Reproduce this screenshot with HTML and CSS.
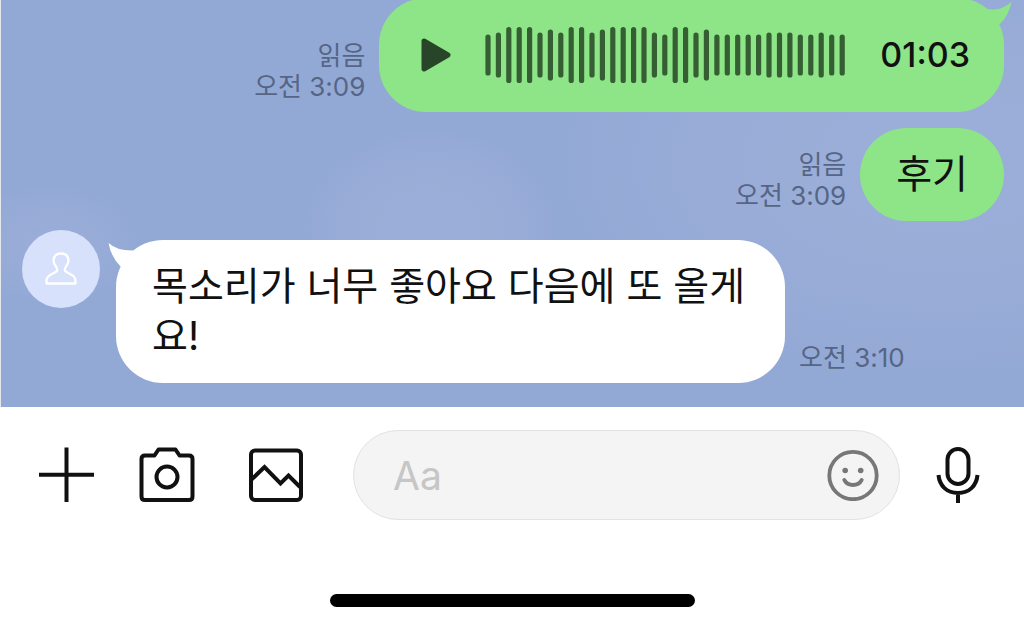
FILE: index.html
```html
<!DOCTYPE html>
<html lang="ko">
<head>
    <meta charset="UTF-8">
    <meta name="viewport" content="width=device-width, initial-scale=1.0">
    <title>채팅</title>
    <link rel="stylesheet" href="styles.css">
</head>
<body>
    <main class="chat">
        <div class="message sent">
            <div class="meta">
                <span>읽음</span>
                <time>오전 3:09</time>
            </div>
            <div class="bubble voice">
                <button type="button" class="play-btn" aria-label="재생">
                    <svg width="30" height="34" viewBox="0 0 30 34">
                        <path d="M3 3 L27 17 L3 31 Z" fill="#28452a" stroke="#28452a" stroke-width="5" stroke-linejoin="round"/>
                    </svg>
                </button>
                <svg class="waveform" width="361" height="58" viewBox="0 0 361 58">
                    <path d="M3 11v36M13.4 9v40M23.8 3.500v51M34.200 3.500v51M44.600 3.500v51M55 9v40M65.400 6v46M75.800 9v40M86.200 3.500v51M96.600 3.500v51M107 9v40M117.400 6v46M127.800 3.500v51M138.200 3.500v51M148.600 3.500v51M159 3.500v51M169.400 9v40M179.800 11v36M190.200 3.500v51M200.600 3.500v51M211 9v40M221.400 6v46M231.900 11v36M242.300 11v36M252.700 11v36M263.200 11v36M273.600 11v36M284 9v40M294.500 9v40M304.900 9v40M315.300 11v36M325.800 11v36M336.200 9v40M346.700 11v36M357.200 11v36" stroke="#355f33" stroke-width="5.200" stroke-linecap="round"/>
                </svg>
                <span class="duration">01:03</span>
                <svg class="tail" width="40" height="32" viewBox="0 0 40 32">
                    <path d="M14 10.500 Q28 14 39.500 4 Q37 17 28 26 L14 30 Z" fill="#8ee588"/>
                </svg>
            </div>
        </div>

        <div class="message sent">
            <div class="meta">
                <span>읽음</span>
                <time>오전 3:09</time>
            </div>
            <div class="bubble">후기</div>
        </div>

        <div class="message received">
            <div class="avatar">
                <svg width="32" height="34" viewBox="0 0 32 34" fill="none" stroke="#fff" stroke-width="2.300" stroke-linejoin="round">
                    <path d="M12 19 Q12.500 17 11 14.500 Q8.500 11.500 8.500 8.500 Q9 1.500 16 1.500 Q23 1.500 23.500 8.500 Q23.500 11.500 21 14.500 Q19.500 17 20 19 Q22 20.500 25 22 Q30.500 24.500 30.500 29 V31.500 H1.500 V29 Q1.500 24.500 7 22 Q10 20.500 12 19 Z"/>
                </svg>
            </div>
            <div class="bubble">
                목소리가 너무 좋아요 다음에 또 올게요!
                <svg class="tail" width="40" height="32" viewBox="0 0 40 32">
                    <path d="M0.500 3 Q9 11 26 10.500 L36 20 L13 27 Q3 17 0.500 3 Z" fill="#fff"/>
                </svg>
            </div>
            <div class="meta">
                <time>오전 3:10</time>
            </div>
        </div>
    </main>

    <footer class="composer">
        <form class="composer-row">
            <button type="button" class="icon-btn" aria-label="추가">
                <svg width="56" height="56" viewBox="0 0 56 56" fill="none" stroke="#111" stroke-width="4">
                    <path d="M28.500 0.500V55M1 27.700H56"/>
                </svg>
            </button>
            <button type="button" class="icon-btn" aria-label="카메라">
                <svg width="56" height="56" viewBox="0 0 56 56" fill="none" stroke="#111" stroke-width="4" stroke-linejoin="round">
                    <path d="M6 8.500H15.500L19.500 2.500H36.500L40.500 8.500H50Q53.500 8.500 53.500 12V49.500Q53.500 53 50 53H6Q2.500 53 2.500 49.500V12Q2.500 8.500 6 8.500Z"/>
                    <circle cx="28" cy="30" r="10.500"/>
                </svg>
            </button>
            <button type="button" class="icon-btn" aria-label="사진">
                <svg width="56" height="56" viewBox="0 0 56 56" fill="none" stroke="#111" stroke-width="4">
                    <rect x="3" y="3.500" width="50" height="49.500" rx="4"/>
                    <path d="M3 33L16.500 20L32.500 36.500L40.500 28.500L52 40"/>
                </svg>
            </button>
            <div class="text-field">
                <input type="text" placeholder="Aa" aria-label="메시지 입력">
                <button type="button" class="emoji-btn" aria-label="이모티콘">
                    <svg width="52" height="52" viewBox="0 0 52 52" fill="none" stroke="#777" stroke-width="3.800" stroke-linecap="round">
                        <circle cx="26" cy="26.500" r="23.700"/>
                        <circle cx="18.200" cy="21.500" r="2.800" fill="#777" stroke="none"/>
                        <circle cx="33.700" cy="21.500" r="2.800" fill="#777" stroke="none"/>
                        <path d="M17.300 31Q20 36 26 36T34.700 31"/>
                    </svg>
                </button>
            </div>
            <button type="button" class="icon-btn" aria-label="음성 메시지">
                <svg width="56" height="56" viewBox="0 0 56 56" fill="none" stroke="#111" stroke-width="4">
                    <rect x="17.500" y="2" width="21" height="35" rx="10.500"/>
                    <path d="M8.500 28C9.500 39 17 46 28 46S46.500 39 47.500 28M28 46V56"/>
                </svg>
            </button>
        </form>
        <div class="home-indicator"></div>
    </footer>
</body>
</html>
```

FILE: styles.css
```css
* {
    margin: 0;
    padding: 0;
    box-sizing: border-box;
}

body {
    font-family: Inter, 'Noto Sans CJK KR', sans-serif;
    background: #fff;
    color: #111;
    min-height: 100vh;
    display: flex;
    flex-direction: column;
    overflow: hidden;
}

button {
    background: none;
    border: none;
    cursor: pointer;
}

svg {
    display: block;
}

/* Messages */
.chat {
    flex: 1 0 0;
    min-height: 0;
    display: flex;
    flex-direction: column;
    justify-content: flex-end;
    padding: 0 20px 24px 21px;
    border-left: 1px solid #e4e7ee;
    overflow: hidden;
    background:
        radial-gradient(ellipse 130px 100px at 42% 56%, rgba(160, 177, 218, 0.6) 40%, transparent 100%),
        radial-gradient(ellipse 90px 60px at 5% 60%, rgba(160, 177, 218, 0.5) 20%, transparent 100%),
        radial-gradient(ellipse 400px 220px at 92% 40%, rgba(160, 177, 218, 0.6) 30%, transparent 100%),
        #93a9d5;
}

.message {
    display: flex;
    flex-shrink: 0;
    align-items: flex-end;
}

.sent {
    justify-content: flex-end;
    gap: 14px;
    margin-bottom: 16px;
}

.sent + .received {
    margin-top: -7px;
}

.bubble {
    position: relative;
    padding: 21px 36px 22px;
    border-radius: 47px;
    font-size: 39px;
    line-height: 50px;
}

.sent .bubble {
    background: #8ee588;
}

.received .bubble {
    max-width: 669px;
    margin: 10px 14px 0 16px;
    background: #fff;
}

.sent .voice {
    display: flex;
    align-items: center;
    padding: 28px 34px 28px 42px;
}

.play-btn {
    margin-right: 34px;
}

.waveform {
    margin-right: 34px;
}

.duration {
    font-size: 34px;
    font-weight: 500;
    line-height: 58px;
}

.tail {
    position: absolute;
    top: 0;
}

.sent .tail {
    right: -8px;
}

.received .tail {
    left: -8px;
}

.meta {
    display: flex;
    flex-direction: column;
    align-items: flex-end;
    margin-bottom: 10px;
    color: #566585;
    font-size: 26px;
    line-height: 31px;
    white-space: nowrap;
}

.avatar {
    flex: none;
    align-self: flex-start;
    display: flex;
    align-items: center;
    justify-content: center;
    width: 78px;
    height: 78px;
    border-radius: 50%;
    background: #d7e1fc;
}

/* Input bar */
.composer {
    padding: 23px 38px 21px;
}

.composer-row {
    display: flex;
    align-items: center;
}

.icon-btn {
    flex: none;
}

.icon-btn + .icon-btn {
    margin-left: 53px;
}

.icon-btn:nth-of-type(2) {
    margin-left: 45px;
}

.text-field {
    flex: 1;
    min-width: 0;
    display: flex;
    align-items: center;
    height: 90px;
    margin: 0 30px 0 49px;
    padding: 0 20px 0 39px;
    background: #f4f4f4;
    border: 1px solid #e2e2e2;
    border-radius: 45px;
}

.text-field input {
    flex: 1;
    min-width: 0;
    border: none;
    outline: none;
    background: transparent;
    font-family: inherit;
    font-size: 39px;
}

.text-field input::placeholder {
    color: #c6c6c6;
}

.home-indicator {
    width: 365px;
    height: 13px;
    margin: 74px auto 0;
    border-radius: 7px;
    background: #000;
}
```
